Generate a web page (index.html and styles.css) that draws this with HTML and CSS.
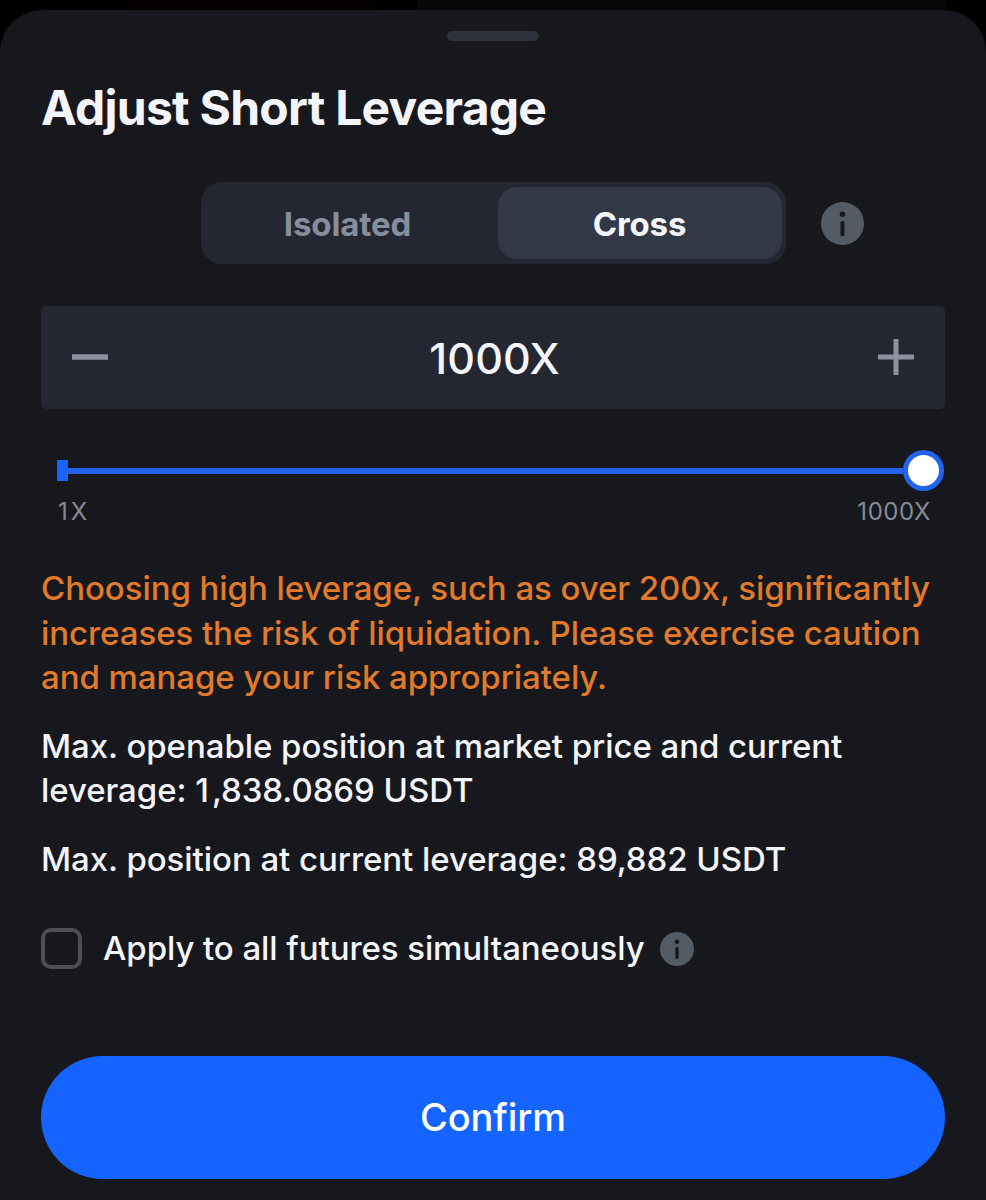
FILE: index.html
```html
<!DOCTYPE html>
<html lang="en">
<head>
<meta charset="utf-8">
<title>Adjust Short Leverage</title>
<link rel="stylesheet" href="styles.css">
</head>
<body>
<div class="backdrop"><i class="red-panel"></i><i class="grey-panel"></i></div>
<main class="sheet">
  <div class="handle"></div>
  <h1 class="title">Adjust Short Leverage</h1>
  <div class="mode-row">
    <div class="segmented">
      <button class="segment">Isolated</button>
      <button class="segment active">Cross</button>
    </div>
    <svg class="info info-large" viewBox="0 0 42 42"><circle cx="21" cy="21" r="21" fill="#555b65"/><circle cx="21" cy="12" r="2.7" fill="#17181c"/><path d="M21 20.5V31.5" fill="none" stroke="#17181c" stroke-width="4" stroke-linecap="round"/></svg>
  </div>
  <div class="stepper">
    <svg class="step-icon" viewBox="0 0 36 36"><path d="M0 18H36" stroke="#8a92a0" stroke-width="5.5"/></svg>
    <span class="value">1000X</span>
    <svg class="step-icon" viewBox="0 0 36 36"><path d="M0 18H36M18 0V36" stroke="#8a92a0" stroke-width="5"/></svg>
  </div>
  <div class="slider"><i class="start"></i><i class="track"></i><i class="thumb"></i></div>
  <div class="range"><span class="range-min">1X</span><span>1000X</span></div>
  <p class="copy warning">Choosing high leverage, such as over 200x, significantly<br>increases the risk of liquidation. Please exercise caution<br>and manage your risk appropriately.</p>
  <p class="copy">Max. openable position at market price and current<br>leverage: <span class="lead-digit">1</span>,838.0869 USDT</p>
  <p class="copy">Max. position at current leverage: 89,882 USDT</p>
  <div class="apply">
    <span class="checkbox"></span>
    <span class="apply-label">Apply to all futures simultaneously</span>
    <svg class="info info-small" viewBox="0 0 42 42"><circle cx="21" cy="21" r="21" fill="#555b65"/><circle cx="21" cy="12" r="2.7" fill="#17181c"/><path d="M21 20.5V31.5" fill="none" stroke="#17181c" stroke-width="4" stroke-linecap="round"/></svg>
  </div>
  <button class="confirm">Confirm</button>
</main>
</body>
</html>
```
FILE: styles.css
```css
* { box-sizing: border-box; }
body { margin: 0; background: #000; font-family: Inter, "Liberation Sans", sans-serif; color: #f4f5fa; }
button { border: 0; padding: 0; font: inherit; color: inherit; }
.backdrop { display: flex; height: 10px; padding-left: 128px; }
.red-panel { width: 247px; background: #060101; }
.grey-panel { width: 528px; margin-left: 42px; background: #060709; }
.sheet { height: 1190px; padding: 21px 41px 0; border-radius: 42px 42px 0 0; background: #17181d; overflow: hidden; }
.handle { width: 92px; height: 10px; margin: 0 auto; border-radius: 5px; background: #2d313b; }
.title { margin: 37px 0 0; height: 60px; line-height: 60px; font-size: 48px; font-weight: 700; letter-spacing: -0.75px; white-space: nowrap; }
.mode-row { display: flex; align-items: flex-start; margin: 44px 0 0 160px; height: 83px; }
.segmented { display: flex; width: 585px; height: 82px; padding: 5px 4px 5px 0; border-radius: 21px; background: #242731; }
.segment { width: 297px; padding: 1px 4px 0 0; border-radius: 19px; background: none; color: #868e9d; font-size: 33px; font-weight: 700; letter-spacing: -0.1px; }
.segment.active { width: 284px; padding: 1px 1px 0 0; background: #333846; color: #f5f6fa; }
.info { display: block; flex: none; }
.info-large { width: 43px; height: 43px; margin: 20px 0 0 35px; }
.stepper { display: flex; align-items: center; justify-content: space-between; height: 103px; margin-top: 41px; padding: 0 31px 1px; border-radius: 5px; background: #242731; }
.step-icon { width: 36px; height: 36px; }
.value { padding: 1px 0 0 3px; font-size: 43px; font-weight: 450; line-height: 52px; letter-spacing: 0.2px; }
.slider { display: flex; align-items: center; height: 41px; margin: 41px 1px 0 16px; }
.start { width: 11px; height: 21px; background: #1764ff; }
.track { flex: 1; height: 6px; background: #2262e8; }
.thumb { width: 41px; height: 41px; border: 5px solid #1f63ef; border-radius: 50%; background: #fff; }
.range { display: flex; justify-content: space-between; height: 30px; margin: 5px 14px 0 17px; padding-top: 1px; font-size: 24px; line-height: 30px; letter-spacing: 0.6px; color: #868b95; }
.range-min { letter-spacing: 3px; }
.copy { margin: 24px 0 0; font-size: 33px; font-weight: 500; line-height: 44.5px; letter-spacing: -0.06px; white-space: nowrap; }
.copy.warning { margin-top: 40px; color: #e17a2b; }
.lead-digit { letter-spacing: 3px; }
.apply { display: flex; align-items: center; height: 42px; margin-top: 46px; }
.checkbox { width: 41px; height: 41px; border: 4px solid #4d4e54; border-radius: 10px; }
.apply-label { margin-left: 21px; font-size: 33px; font-weight: 500; line-height: 42px; letter-spacing: -0.08px; white-space: nowrap; }
.info-small { width: 34px; height: 34px; margin: 1px 0 0 15px; }
.confirm { display: block; width: 904px; height: 123px; margin-top: 87px; padding-bottom: 2px; border-radius: 62px; background: #1564ff; color: #fff; font-size: 38px; font-weight: 500; letter-spacing: -0.1px; }
```
